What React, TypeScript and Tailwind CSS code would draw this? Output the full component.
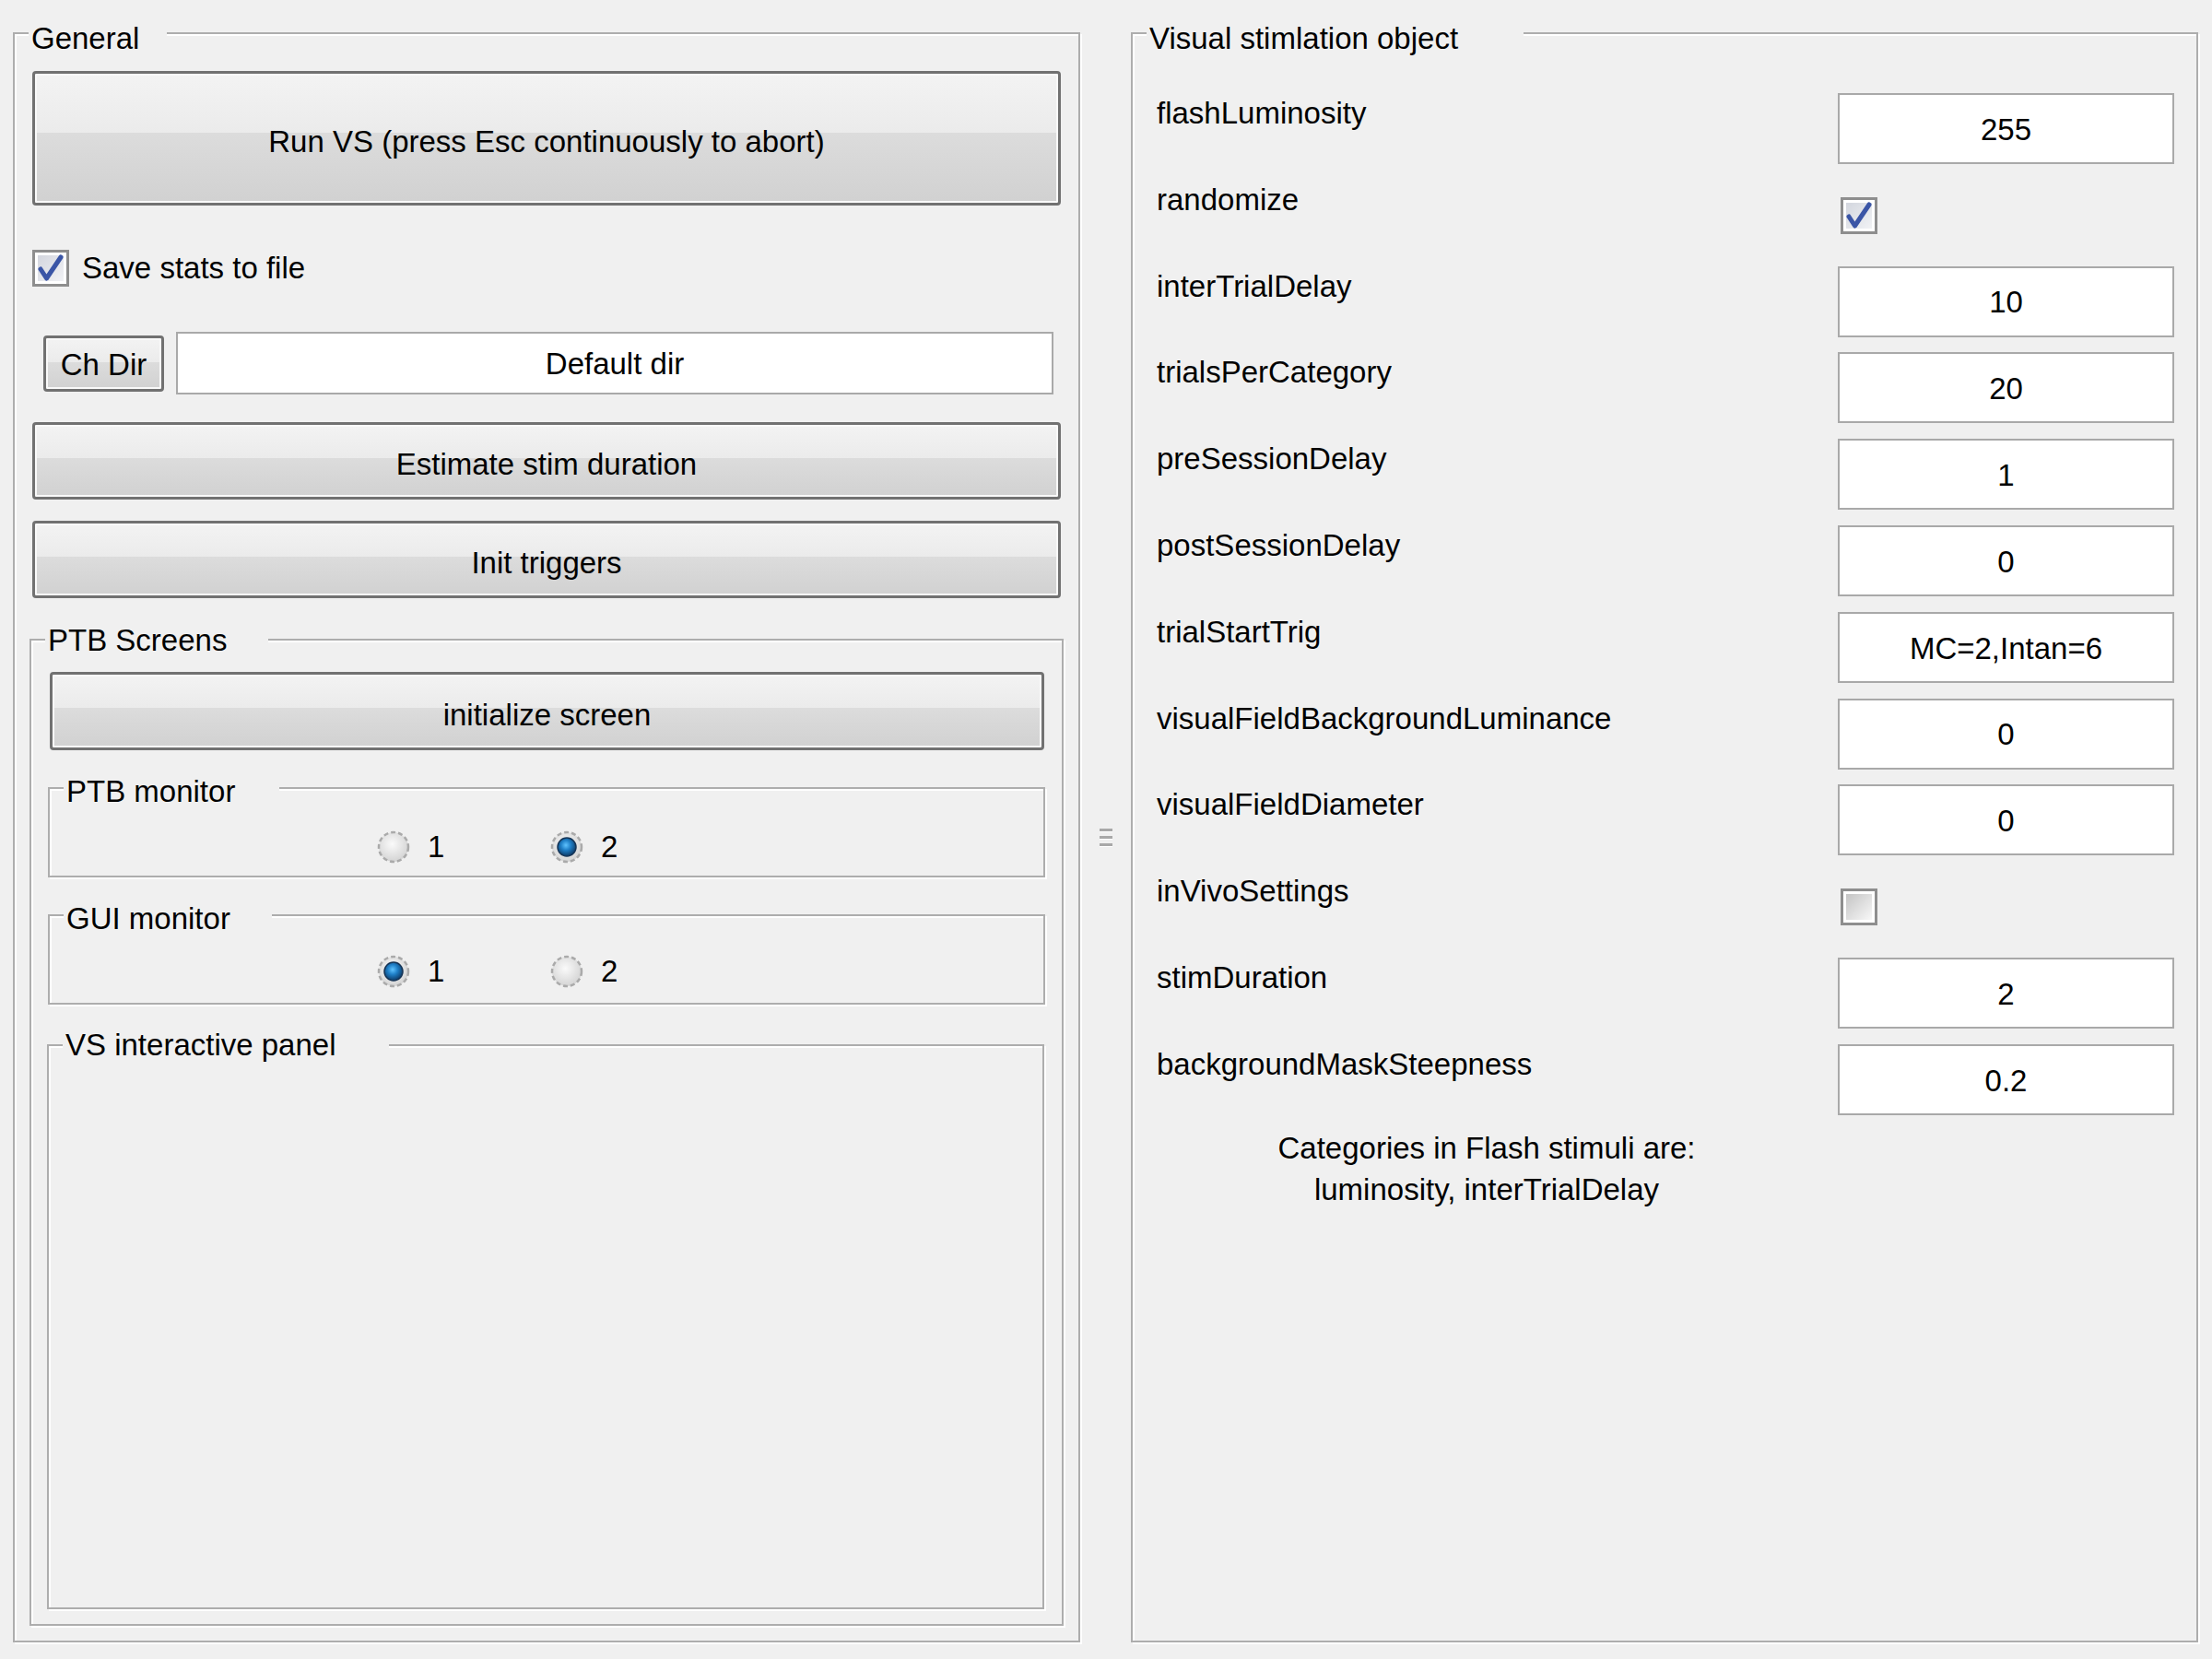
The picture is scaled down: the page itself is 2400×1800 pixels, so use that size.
import React from 'react';

// MATLAB-style etched group box with its title sitting on the top line
function GroupBox({ title, titleW, titleTop, className, children }: {
  title: string; titleW: string; titleTop?: string; className?: string; children?: React.ReactNode;
}) {
  return (
    <div className={`relative border-2 border-[#adadad] shadow-[inset_2px_2px_0_#ffffff,2px_2px_0_#ffffff] ${className ?? ''}`}>
      <span className={`absolute left-[15px] h-[38px] pl-[3px] leading-[38px] bg-[#f0f0f0] whitespace-nowrap ${titleTop ?? 'top-[-17px]'} ${titleW}`}>
        {title}
      </span>
      {children}
    </div>
  );
}

function PushButton({ label, className }: { label: string; className?: string }) {
  return (
    <div className={`flex items-center justify-center pt-[8px] rounded-[4px] border-[3px] border-[#717171] shadow-[inset_0_0_0_2px_#f9f9f9] bg-[linear-gradient(to_bottom,#f3f3f3_0%,#ebebeb_46%,#dcdcdc_46%,#d1d1d1_100%)] ${className ?? ''}`}>
      {label}
    </div>
  );
}

function CheckBox({ on }: { on?: boolean }) {
  return (
    <svg width="40" height="40" viewBox="0 0 40 40" className="shrink-0">
      <defs>
        <linearGradient id="cbOff" x1="0" y1="0" x2="1" y2="1">
          <stop offset="0" stopColor="#c4c4c4" />
          <stop offset="1" stopColor="#f8f8f8" />
        </linearGradient>
        <linearGradient id="cbOn" x1="0" y1="0" x2="1" y2="1">
          <stop offset="0" stopColor="#d3d6de" />
          <stop offset="1" stopColor="#f1f2f5" />
        </linearGradient>
      </defs>
      <rect x="1.5" y="1.5" width="37" height="37" fill="#ffffff" stroke="#8e8e8e" strokeWidth="3" />
      <rect x="6" y="6" width="28" height="28" fill={on ? 'url(#cbOn)' : 'url(#cbOff)'} />
      {on && (
        <path d="M9 21 L15.5 31 L31 8" fill="none" stroke="#3a55a6" strokeWidth="5" strokeLinejoin="round" strokeLinecap="round" />
      )}
    </svg>
  );
}

function Radio({ on }: { on?: boolean }) {
  return (
    <svg width="36" height="36" viewBox="0 0 36 36" className="shrink-0">
      <defs>
        <radialGradient id="rdOff" cx="45%" cy="40%" r="60%">
          <stop offset="0" stopColor="#fafafa" />
          <stop offset="1" stopColor="#d4d4d4" />
        </radialGradient>
        <radialGradient id="rdOn" cx="45%" cy="40%" r="60%">
          <stop offset="0" stopColor="#5fc3ff" />
          <stop offset="0.45" stopColor="#1f7fc7" />
          <stop offset="1" stopColor="#0d3a66" />
        </radialGradient>
      </defs>
      <circle cx="18" cy="18" r="16" fill="url(#rdOff)" stroke="#aaaaaa" strokeWidth="2.5" strokeDasharray="5 3" />
      {on && <circle cx="18" cy="18" r="10" fill="url(#rdOn)" stroke="#153456" strokeWidth="1.5" />}
    </svg>
  );
}

function RadioPair({ selected }: { selected: 1 | 2 }) {
  return (
    <div className="flex items-center pl-[355px]">
      {[1, 2].map(n => (
        <div key={n} className="flex items-center w-[188px]">
          <Radio on={selected === n} />
          <span className="ml-[19px] leading-[38px]">{n}</span>
        </div>
      ))}
    </div>
  );
}

function EditField({ value, className }: { value: string; className?: string }) {
  return (
    <div className={`flex items-center justify-center pt-[2px] bg-white border-2 border-[#a9a9a9] whitespace-nowrap ${className ?? ''}`}>
      {value}
    </div>
  );
}

const params: { label: string; value?: string; check?: boolean }[] = [
  { label: 'flashLuminosity', value: '255' },
  { label: 'randomize', check: true },
  { label: 'interTrialDelay', value: '10' },
  { label: 'trialsPerCategory', value: '20' },
  { label: 'preSessionDelay', value: '1' },
  { label: 'postSessionDelay', value: '0' },
  { label: 'trialStartTrig', value: 'MC=2,Intan=6' },
  { label: 'visualFieldBackgroundLuminance', value: '0' },
  { label: 'visualFieldDiameter', value: '0' },
  { label: 'inVivoSettings', check: false },
  { label: 'stimDuration', value: '2' },
  { label: 'backgroundMaskSteepness', value: '0.2' },
];

export default function App() {
  return (
    <div className="w-[2400px] h-[1800px] bg-[#f0f0f0] flex pl-[14px] pt-[35px] font-['Liberation_Sans',Arial,sans-serif] text-[33px] text-black overflow-hidden">
      {/* General */}
      <GroupBox title="General" titleW="w-[150px]" titleTop="top-[-14px]" className="w-[1158px] h-[1747px] shrink-0 flex flex-col">
        <PushButton label="Run VS (press Esc continuously to abort)" className="mt-[40px] mx-[19px] h-[146px]" />

        <div className="mt-[48px] ml-[19px] h-[40px] flex items-center">
          <CheckBox on />
          <span className="ml-[14px] leading-[38px]">Save stats to file</span>
        </div>

        <div className="mt-[49px] pl-[31px] h-[68px] flex items-center">
          <div className="w-[131px] h-[61px] flex items-center justify-center pt-[4px] rounded-[4px] border-[3px] border-[#717171] shadow-[inset_0_0_0_2px_#f9f9f9] bg-[linear-gradient(to_bottom,#f3f3f3_0%,#ebebeb_48%,#dcdcdc_48%,#d1d1d1_100%)]">
            Ch Dir
          </div>
          <EditField value="Default dir" className="ml-[13px] w-[952px] h-[68px]" />
        </div>

        <PushButton label="Estimate stim duration" className="mt-[30px] mx-[19px] h-[84px]" />
        <PushButton label="Init triggers" className="mt-[23px] mx-[19px] h-[84px]" />

        <GroupBox title="PTB Screens" titleW="w-[242px]" titleTop="top-[-19px]" className="mt-[44px] ml-[16px] w-[1122px] h-[1071px] flex flex-col">
          <PushButton label="initialize screen" className="mt-[34px] ml-[20px] w-[1079px] h-[85px]" />

          <GroupBox title="PTB monitor" titleW="w-[234px]" titleTop="top-[-16px]" className="mt-[40px] ml-[18px] w-[1082px] h-[98px] pt-[44px]">
            <RadioPair selected={2} />
          </GroupBox>

          <GroupBox title="GUI monitor" titleW="w-[226px]" titleTop="top-[-16px]" className="mt-[40px] ml-[18px] w-[1082px] h-[98px] pt-[41px]">
            <RadioPair selected={1} />
          </GroupBox>

          <GroupBox title="VS interactive panel" titleW="w-[354px]" titleTop="top-[-20px]" className="mt-[43px] ml-[17px] w-[1082px] h-[613px]" />
        </GroupBox>
      </GroupBox>

      {/* splitter grip */}
      <div className="w-[55px] h-[1747px] shrink-0 flex flex-col items-center justify-center gap-[5px]">
        <div className="w-[14px] h-[3px] bg-[#a8a8a8] shadow-[0_1px_0_#ffffff]" />
        <div className="w-[14px] h-[3px] bg-[#a8a8a8] shadow-[0_1px_0_#ffffff]" />
        <div className="w-[14px] h-[3px] bg-[#a8a8a8] shadow-[0_1px_0_#ffffff]" />
      </div>

      {/* Visual stimulation object */}
      <GroupBox title="Visual stimlation object" titleW="w-[409px]" titleTop="top-[-14px]" className="w-[1158px] h-[1747px] shrink-0 flex flex-col pt-[64px]">
        {params.map(p => (
          <div key={p.label} className="h-[93.8px] flex items-start pl-[26px] pr-[24px]">
            <span className="flex-1 pt-[3px] leading-[38px] whitespace-nowrap">{p.label}</span>
            {p.value !== undefined ? (
              <EditField value={p.value} className="w-[365px] h-[77px]" />
            ) : (
              <div className="w-[365px] pl-[3px] pt-[19px]">
                <CheckBox on={p.check} />
              </div>
            )}
          </div>
        ))}
        <div className="-mt-[4px] ml-[26px] w-[716px] text-center leading-[45px]">
          <div>Categories in Flash stimuli are:</div>
          <div>luminosity, interTrialDelay</div>
        </div>
      </GroupBox>
    </div>
  );
}
